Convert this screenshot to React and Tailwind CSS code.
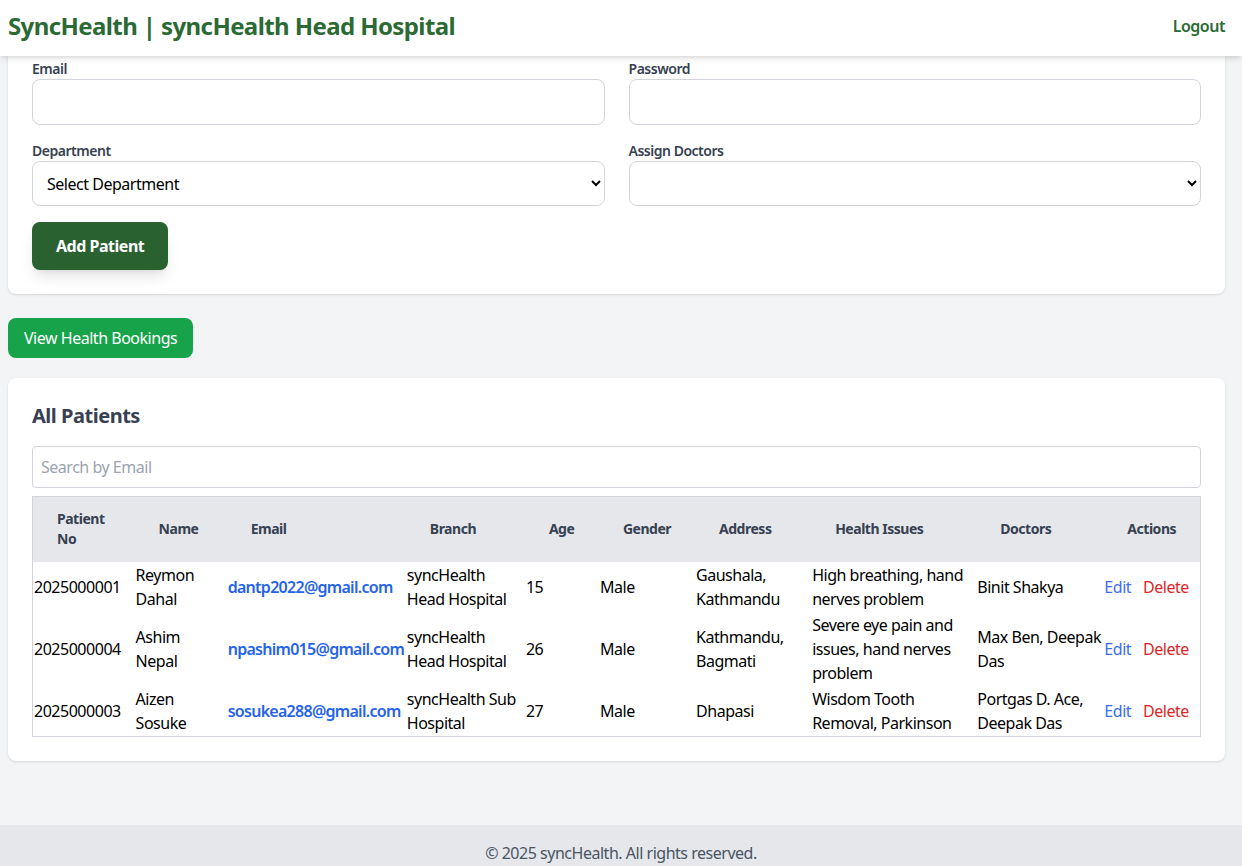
import React from "react";

const rows = [
  {
    no: "2025000001",
    name: "Reymon Dahal",
    email: "dantp2022@gmail.com",
    branch: "syncHealth Head Hospital",
    age: "15",
    gender: "Male",
    address: "Gaushala, Kathmandu",
    issues: "High breathing, hand nerves problem",
    doctors: "Binit Shakya",
  },
  {
    no: "2025000004",
    name: "Ashim Nepal",
    email: "npashim015@gmail.com",
    branch: "syncHealth Head Hospital",
    age: "26",
    gender: "Male",
    address: "Kathmandu, Bagmati",
    issues: "Severe eye pain and issues, hand nerves problem",
    doctors: "Max Ben, Deepak Das",
  },
  {
    no: "2025000003",
    name: "Aizen Sosuke",
    email: "sosukea288@gmail.com",
    branch: "syncHealth Sub Hospital",
    age: "27",
    gender: "Male",
    address: "Dhapasi",
    issues: "Wisdom Tooth Removal, Parkinson",
    doctors: "Portgas D. Ace, Deepak Das",
  },
];

const headers = [
  "Patient No",
  "Name",
  "Email",
  "Branch",
  "Age",
  "Gender",
  "Address",
  "Health Issues",
  "Doctors",
  "Actions",
];

export default function App() {
  return (
    <div
      className="min-h-screen bg-[#f3f4f6] text-black tracking-[-0.03em]"
      style={{ fontFamily: '"Noto Sans", "Open Sans", sans-serif' }}
    >
      <header className="h-14 bg-white shadow-md flex items-center justify-between pl-2 pr-[17px] pb-1 relative z-10">
        <h1 className="text-2xl font-bold text-[#2b6a34] tracking-[-0.025em]">
          SyncHealth | syncHealth Head Hospital
        </h1>
        <button className="text-base font-semibold text-[#2b6a34]">Logout</button>
      </header>

      <main className="ml-2 mr-[17px] pb-16">
        <section className="bg-white rounded-b-lg shadow px-6 pt-[3px] pb-6">
          <div className="grid grid-cols-2 gap-x-6 gap-y-4">
            <div>
              <label className="block text-sm font-semibold leading-5 text-[#374151]">Email</label>
              <input className="w-full h-[46px] border border-[#d1d5db] rounded-lg px-3 outline-none" />
            </div>
            <div>
              <label className="block text-sm font-semibold leading-5 text-[#374151]">Password</label>
              <input type="password" className="w-full h-[46px] border border-[#d1d5db] rounded-lg px-3 outline-none" />
            </div>
            <div>
              <label className="block text-sm font-semibold leading-5 text-[#374151]">Department</label>
              <select className="w-full h-[45px] border border-[#d1d5db] rounded-lg pl-[10px] pr-2 bg-white text-base text-black tracking-[-0.03em]">
                <option>Select Department</option>
              </select>
            </div>
            <div>
              <label className="block text-sm font-semibold leading-5 text-[#374151]">Assign Doctors</label>
              <select className="w-full h-[45px] border border-[#d1d5db] rounded-lg pl-[10px] pr-2 bg-white text-base text-black">
                <option></option>
              </select>
            </div>
          </div>
          <button className="mt-4 h-12 px-6 rounded-lg bg-[#2a6130] text-white font-bold text-base shadow-lg tracking-[-0.03em]">
            Add Patient
          </button>
        </section>

        <button className="mt-6 h-10 px-4 rounded-lg bg-[#16a34a] text-white text-base tracking-[-0.03em]">
          View Health Bookings
        </button>

        <section className="mt-5 bg-white rounded-lg shadow p-6">
          <h2 className="text-xl font-bold text-[#374151] leading-7 mb-4">All Patients</h2>
          <input
            placeholder="Search by Email"
            className="w-full h-[42px] border border-[#d1d5db] rounded px-2 text-base tracking-[-0.03em] placeholder:text-[#9ca3af] outline-none"
          />
          <table className="mt-2 w-full table-fixed border border-[#d1d5db] border-collapse text-base">
            <colgroup>
              <col className="w-[102px]" />
              <col className="w-[92px]" />
              <col className="w-[179px]" />
              <col className="w-[119px]" />
              <col className="w-[74px]" />
              <col className="w-[96px]" />
              <col className="w-[116px]" />
              <col className="w-[165px]" />
              <col className="w-[127px]" />
              <col className="w-[97px]" />
            </colgroup>
            <thead>
              <tr className="bg-[#e5e7eb] h-[65px]">
                {headers.map((h) => (
                  <th
                    key={h}
                    className="px-6 py-3 text-left align-middle text-sm font-bold leading-5 text-[#374151]"
                  >
                    {h}
                  </th>
                ))}
              </tr>
            </thead>
            <tbody>
              {rows.map((r) => (
                <tr key={r.no} className="leading-6">
                  <td className="p-px align-middle">{r.no}</td>
                  <td className="p-px align-middle">
                    <span className="block max-w-[80px]">{r.name}</span>
                  </td>
                  <td className="p-px align-middle font-semibold text-[#2563eb] whitespace-nowrap tracking-[-0.045em]">{r.email}</td>
                  <td className="p-px align-middle">{r.branch}</td>
                  <td className="p-px align-middle">{r.age}</td>
                  <td className="p-px align-middle">{r.gender}</td>
                  <td className="p-px align-middle">{r.address}</td>
                  <td className="p-px align-middle">{r.issues}</td>
                  <td className="p-px align-middle">{r.doctors}</td>
                  <td className="p-px align-middle whitespace-nowrap">
                    <button className="text-[#3b6ef0] tracking-[-0.03em]">Edit</button>
                    <button className="ml-3 text-[#dc2626] tracking-[-0.03em]">Delete</button>
                  </td>
                </tr>
              ))}
            </tbody>
          </table>
        </section>
      </main>

      <footer className="bg-[#e5e7eb] py-4 text-center text-base text-[#4b5563]">
        © 2025 syncHealth. All rights reserved.
      </footer>
    </div>
  );
}
